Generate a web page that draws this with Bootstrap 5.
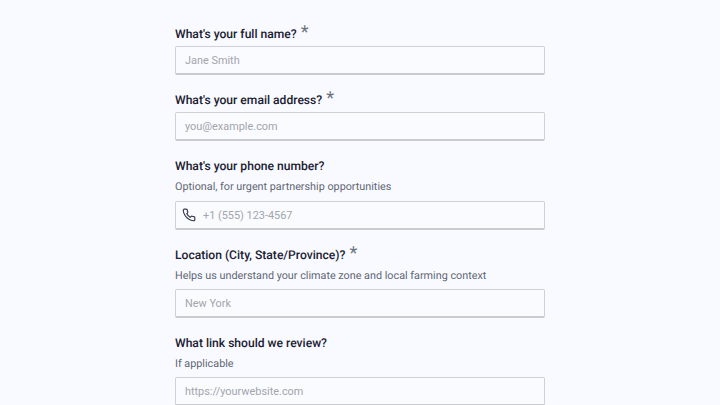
<!DOCTYPE html>
<html lang="en">
<head>
<meta charset="utf-8">
<title>Form</title>
<link href="https://cdn.jsdelivr.net/npm/bootstrap@5.3.0/dist/css/bootstrap.min.css" rel="stylesheet">
<style>
html, body { height: 405px; overflow: hidden; }
body { background: #f9faff; font-family: Roboto, sans-serif; color: #111827; text-rendering: geometricPrecision; }
.form-wrap { width: 370px; margin: 0 auto; padding-top: 24px; }
.field-block { margin-bottom: 15px; }
.field-label { font-size: 12.1px; font-weight: 500; line-height: 20px; color: #1a2030; margin-bottom: 2px; display: block; }
.req { font-size: 18px; font-weight: 400; line-height: 16px; color: #6b7280; margin-left: 1px; }
.hint { font-size: 10.8px; line-height: 18px; color: #5f6673; margin-top: -0.5px; margin-bottom: 4.5px; }
.field-input.form-control { height: 29px; border-radius: 2px; border: 1px solid #cfd1d7; border-bottom: 2px solid #c9cbd1; background: #fafbff; font-size: 10.9px; padding: 0 9px; color: #111827; box-shadow: none; }
.field-input.form-control::placeholder { color: #a2a5ac; }
.phone-wrap { position: relative; padding-top: 1px; }
.phone-wrap svg { position: absolute; left: 7px; top: 8px; width: 14px; height: 14px; }
.phone-wrap .field-input.form-control { padding-left: 27px; }
</style>
</head>
<body>
<div class="form-wrap">
  <div class="field-block">
    <label class="field-label">What's your full name? <span class="req">*</span></label>
    <input class="form-control field-input" placeholder="Jane Smith">
  </div>
  <div class="field-block">
    <label class="field-label">What's your email address? <span class="req">*</span></label>
    <input class="form-control field-input" placeholder="you@example.com">
  </div>
  <div class="field-block">
    <label class="field-label">What's your phone number?</label>
    <div class="hint">Optional, for urgent partnership opportunities</div>
    <div class="phone-wrap">
      <svg viewBox="0 0 24 24" fill="none" stroke="#333a47" stroke-width="2" stroke-linecap="round" stroke-linejoin="round"><path d="M22 16.92v3a2 2 0 0 1-2.18 2 19.8 19.8 0 0 1-8.63-3.07 19.5 19.5 0 0 1-6-6 19.8 19.8 0 0 1-3.07-8.67A2 2 0 0 1 4.11 2h3a2 2 0 0 1 2 1.72c.13.96.36 1.9.7 2.81a2 2 0 0 1-.45 2.11L8.09 9.91a16 16 0 0 0 6 6l1.27-1.27a2 2 0 0 1 2.11-.45c.91.34 1.85.57 2.81.7A2 2 0 0 1 22 16.92z"/></svg>
      <input class="form-control field-input" placeholder="+1 (555) 123-4567">
    </div>
  </div>
  <div class="field-block">
    <label class="field-label">Location (City, State/Province)? <span class="req">*</span></label>
    <div class="hint">Helps us understand your climate zone and local farming context</div>
    <input class="form-control field-input" placeholder="New York">
  </div>
  <div class="field-block">
    <label class="field-label">What link should we review?</label>
    <div class="hint">If applicable</div>
    <input class="form-control field-input" placeholder="https://yourwebsite.com">
  </div>
</div>
</body>
</html>
